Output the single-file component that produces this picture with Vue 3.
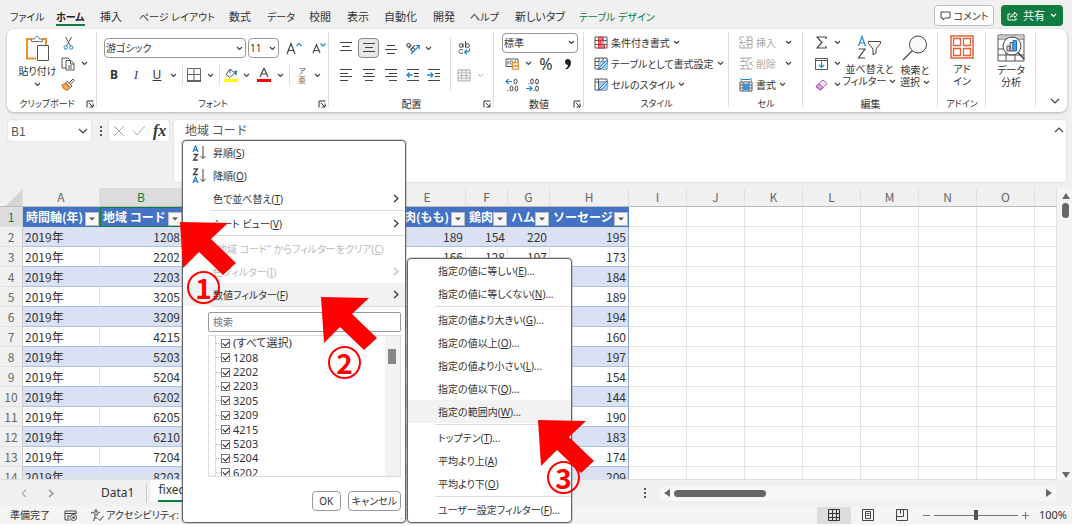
<script setup>
import { h } from 'vue'

const K = 'stroke="#444"'
const B = 'stroke="#1e88d2"'
const shapes = {
  chev: [7, 5, `<path d="M1 1l2.5 2.5L6 1" ${K} stroke-width="1.2"/>`],
  chevBig: [10, 6, `<path d="M1 1l4 4 4-4" ${K} stroke-width="1.2"/>`],
  chevUp: [10, 6, `<path d="M1 5l4-4 4 4" ${K} stroke-width="1.2"/>`],
  chevGrey: [7, 5, `<path d="M1 1l2.5 2.5L6 1" stroke="#aaa"/>`],
  chevWhite: [7, 5, `<path d="M1 1l2.5 2.5L6 1" stroke="#fff" stroke-width="1.2"/>`],
  right: [6, 9, `<path d="M1 1l4 3.500-4 3.500" stroke="currentColor" stroke-width="1.200"/>`],
  left: [6, 9, `<path d="M5 1L1 4.500l4 3.500" stroke="#888"/>`],
  launch: [8, 8, `<path d="M1 7.500V1h6.500M3 3l4 4M7 3.500V7H3.500" stroke="#333"/>`],
  comment: [11, 10, `<path d="M1 1h9v6H5L3 9V7H1z" ${K}/>`],
  share: [11, 11, `<path d="M3.500 4H1v6h8V8M3.500 7.500C4 4.500 6 4 7.500 4V2L10.300 5 7.500 7.500V6C6 6 4.500 6 3.500 7.500z" stroke="#fff"/>`],
  paste: [25, 27, `<path d="M7 4H2v19.500h9M17 4h4v6" stroke="#e8912d" stroke-width="2"/><path d="M3 5h17v17H3z" fill="#fafafa"/><path d="M6.500 6V4h3.200c.3-3.500 4.300-3.500 4.600 0h3.200v2.500h-11z" fill="#fff" stroke="#777"/><path d="M12.500 10.500h11v15h-11z" fill="#fff" stroke="#555"/>`],
  cut: [11, 14, `<path d="M2.500 1l5 9M8.500 1l-5 9" stroke="#555"/><circle cx="2.800" cy="11.500" r="1.700" ${B}/><circle cx="8.200" cy="11.500" r="1.700" ${B}/>`],
  copy: [14, 14, `<path d="M5 11H1V1h6l2 2M5 3.500h5l3 3V13H5zM9.500 3.500V7H13M7 9h4M7 11h4" stroke="#555"/>`],
  brush: [14, 13, `<path d="M8 5l4-4 1 1.500-3.500 4" fill="#fff" stroke="#555"/><path d="M6 3.500l5 4.500-1.500 1.500-5-4.500z" fill="#fff" stroke="#555"/><path d="M4 5.500L1 7c1 3 3 5 5.500 5l2.500-2.500z" fill="#f7b06a" stroke="#e07a1f" stroke-width="1.300"/>`],
  grow: [16, 13, `<path d="M1 12L5 1.500l4 10.500M2.500 8.500h5" ${K} stroke-width="1.200"/><path d="M10.500 4L13 1.500 15.500 4" ${B} stroke-width="1.200"/>`],
  shrink: [14, 12, `<path d="M1 11l3.500-8.500L8 11M2.300 8.500h4.400" ${K} stroke-width="1.200"/><path d="M8.500 1.500L11 4l2.500-2.500" ${B} stroke-width="1.200"/>`],
  border: [14, 14, `<path d="M.500 .500h13M.500 .500v12M13.500 .500v12M7 .500v12M.500 6.500h13" stroke="#666"/><path d="M0 13h14" stroke="#333" stroke-width="1.500"/>`],
  fill: [14, 14, `<path d="M6 1L2 6.500l4 3 4.500-4.500zM6 1v4" stroke="#555"/><path d="M10 3l3-.500-.500 5.500-1.500-2z" fill="#1e6fc2"/><path d="M0 11h14v3H0z" fill="#ff0"/>`],
  color: [14, 14, `<path d="M3 9L7 0l4 9M4.500 6h5" ${K} stroke-width="1.200"/><path d="M0 11h14v3H0z" fill="#f00"/>`],
  top: [14, 14, `<path d="M1 1.500h12M3 5.500h8M1 9.500h12" ${K}/>`],
  mid: [14, 14, `<path d="M1 2.500h12M3 6.500h8M1 10.500h12" ${K}/>`],
  bot: [14, 14, `<path d="M3 5.500h8M1 9.500h12M3 13.500h8" ${K} transform="translate(0 -1)"/>`],
  al: [14, 14, `<path d="M1 1.500h12M1 5.500h8M1 8.500h12M1 12.500h8" ${K}/>`],
  ac: [14, 14, `<path d="M1 1.500h12M3 5.500h8M1 8.500h12M3 12.500h8" ${K}/>`],
  ar: [14, 14, `<path d="M1 1.500h12M5 5.500h8M1 8.500h12M5 12.500h8" ${K}/>`],
  outd: [14, 14, `<path d="M1 1.500h12M8 5.500h5M8 8.500h5M1 12.500h12" ${K}/><path d="M6.500 7H1M3.500 4.500L1 7l2.500 2.500" ${B} stroke-width="1.300"/>`],
  ind: [14, 14, `<path d="M1 1.500h12M8 5.500h5M8 8.500h5M1 12.500h12" ${K}/><path d="M0 7h6M3.500 4.500L6 7 3.500 9.500" ${B} stroke-width="1.300"/>`],
  orient: [14, 14, `<g transform="rotate(45 5 6)" ${K}><circle cx="2" cy="6.500" r="1.700"/><path d="M4 4.500V8.500M6.500 2v6.500"/><circle cx="8.300" cy="6.500" r="1.700"/></g><path d="M5 13l8-8M9.500 4.500H13.300V8" ${B} stroke-width="1.200"/>`],
  wrap: [13, 14, `<g ${K}><circle cx="3" cy="4.500" r="1.800"/><path d="M5 2.500v4M7.500 0v6.500M5 9c-3-1.500-4 .5-4 1.700S3 13 5 12"/><circle cx="9.500" cy="4.500" r="1.900"/></g><path d="M11.500 7.500c.8 2.500-1 3.500-4.500 3.500M8.800 8.500L6.500 11l2.300 2.300" ${B} stroke-width="1.200"/>`],
  merge: [14, 13, `<path d="M1 1h12v11H1zM1 4h12M1 9h12M5 1v3M9 1v3M5 9v3M9 9v3M3.500 6.500h7M5 5L3.500 6.500 5 8M9 5l1.500 1.500L9 8" stroke="#aaa"/>`],
  money: [15, 12, `<path d="M7 8.500H1V1h12v3M3 3v3.500M11 3H9.500" stroke="#555"/><circle cx="6.500" cy="4.500" r="1.500" stroke="#555"/><path d="M7.500 5.500c0-1.500 6-1.500 6 0v5c0 1.500-6 1.500-6 0zM7.500 8h6" fill="#fff" stroke="#e8912d" stroke-width="1.300"/>`],
  comma: [8, 14, `<path d="M1 4.500C1 1 7 1 7 5.500 7 9 5 11.500 2 12.500L1.500 11.500C3 10.500 4 9.500 4 8 2 8 1 6.500 1 4.500z" fill="#222"/>`],
  incDec: [14, 14, `<path d="M7 3.500H1M3.500 1L1 3.500 3.500 6" ${B} stroke-width="1.200"/><ellipse cx="10.500" cy="3.500" rx="1.500" ry="2.500" ${K}/><ellipse cx="6.500" cy="10.500" rx="1.400" ry="2.500" ${K}/><ellipse cx="11.500" cy="10.500" rx="1.400" ry="2.500" ${K}/><path d="M2.500 12.500h1" ${K}/>`],
  decDec: [14, 14, `<path d="M0 10.500h6M3.500 8L6 10.500 3.500 13" ${B} stroke-width="1.200"/><ellipse cx="6" cy="3.500" rx="1.400" ry="2.500" ${K}/><ellipse cx="11" cy="3.500" rx="1.400" ry="2.500" ${K}/><ellipse cx="11" cy="10.500" rx="1.500" ry="2.500" ${K}/><path d="M2.500 5.500h1M7.500 12.500h1" ${K}/>`],
  cond: [14, 13, `<path d="M1 1h12v11H1zM1 4.500h12M1 8.500h12M5 1v11M9 1v11" stroke="#555"/><path d="M4.500 1h4v3.500h-4zM4.500 8.500h6V12h-6zM4.500 5h2.500v3H4.500z" fill="#f4777f" stroke="#d13438"/>`],
  tbl: [14, 13, `<path d="M1 1h12v11H1zM1 4.500h12M1 8.500h12M5 1v11M9 1v11" stroke="#555"/><path d="M5 4.500h8V12H5z" fill="#9ccdf2"/><path d="M13 3L7 9l-3 3.500 4-1.500 5.500-6z" fill="#fff" stroke="#1e6fc2"/>`],
  cellSt: [14, 13, `<path d="M1 1h12v11H1zM1 4h12M4.500 1v11" stroke="#555"/><path d="M5 4.500h8V12H5z" fill="#9ccdf2"/><path d="M13 3L7 9l-3 3.500 4-1.500 5.500-6z" fill="#fff" stroke="#1e6fc2"/>`],
  ins: [14, 13, `<path d="M5 1H1v3M1 9v3h12V1H7M9 1v11M5 9v3M7 4.500h6M7 8.500h6M7 6.500H1M3.500 4L1 6.500 3.500 9" stroke="#aaa"/>`],
  del: [14, 13, `<path d="M1 1h12M1 12h12M4 1v3M9 1v3M4 9v3M9 9v3M1 4.500h7M1 8.500h7M8 4.500v4M10 4.500l3.500 4M13.500 4.500l-3.500 4" stroke="#aaa"/>`],
  fmt: [14, 14, `<path d="M1 4h12v9H1zM1 7h12M1 10h12M4 4v9M10 4v9" stroke="#555"/><path d="M4.500 5.500h5.500V12H4.500z" fill="#3c96dc"/><path d="M2 0v3M12 0v3M3 1.500h8" ${B}/>`],
  sum: [11, 13, `<path d="M10 3V1H1l5 5.500L1 12h9v-2" ${K} stroke-width="1.200"/>`],
  down: [13, 12, `<path d="M.500 .500h12v11H.500zM.500 2.500h12" stroke="#555"/><path d="M6.500 3.500v6M4 7l2.500 2.500L9 7" ${B} stroke-width="1.200"/>`],
  eraser: [13, 12, `<path d="M1 7.500L8 1l4 3.500L5.500 11z" fill="#fff" stroke="#a33fb0"/><path d="M1 7.500L4 4.500l4 4L5.500 11z" fill="#d9a5e0" stroke="#a33fb0"/>`],
  sort: [25, 25, `<path d="M1.500 11L5 1.500l3.500 9.500M2.700 8h4.600" ${B} stroke-width="1.200"/><path d="M1.500 14h6.500l-6.500 9H8" ${K} stroke-width="1.200"/><path d="M11.500 6.500h12v2L19 14v4l-3 2v-6l-4.500-5.500z" ${K}/>`],
  find: [26, 26, `<circle cx="16" cy="9.500" r="8.500" fill="#fafafa" ${K}/><path d="M10 16l-9 9" ${K} stroke-width="1.200"/>`],
  addin: [24, 24, `<path d="M1 1h22v22H1z" stroke="#e2603a" stroke-width="1.500"/><path d="M3.500 3.500h7v7h-7zM13.500 3.500h7v7h-7zM3.500 13.500h7v7h-7zM13.500 13.500h7v7h-7z" stroke="#e2603a" stroke-width="1.300"/>`],
  analyze: [28, 28, `<path d="M1 1h26v26H1zM1 5h26M1 15h8M1 21h26M9 1v4M18 1v4M9 17v10M18 20v7" stroke="#555"/><path d="M1.500 1.500h25v3h-25z" fill="#ccc"/><circle cx="15" cy="12" r="9" fill="#fff" stroke="#444"/><path d="M21 18.500l6 6.500" stroke="#444" stroke-width="1.500"/><path d="M10 12h3v5h-3zM13 8.500h3V17h-3z" fill="#ddd" stroke="#555"/><path d="M16 6.500h3.500V17H16z" fill="#4ca3e8" stroke="#1e6fc2"/>`],
  x: [12, 12, `<path d="M1 1l10 10M11 1L1 11" stroke="#aaa"/>`],
  check: [14, 11, `<path d="M1 5.500L5 10l8-9" stroke="#aaa"/>`],
  asc: [14, 16, `<path d="M1 7l2.500-6L6 7M2 5h3" stroke="#1e88d2" stroke-width="1.300"/><path d="M1.500 9.500H5.500L1.500 15H6" ${K} stroke-width="1.300"/><path d="M11 1v12.500M8.500 11L11 13.500l2.500-2.500" ${K}/>`],
  desc: [14, 16, `<path d="M1.500 1H5.500L1.500 6.500H6" ${K} stroke-width="1.300"/><path d="M1 15l2.500-6L6 15M2 13h3" stroke="#1e88d2" stroke-width="1.300"/><path d="M11 1v12.500M8.500 11L11 13.500l2.500-2.500" ${K}/>`],
  triUp: [8, 6, `<path d="M4 0l4 6H0z" fill="#666"/>`],
  triDown: [8, 6, `<path d="M4 6l4-6H0z" fill="#666"/>`],
  triL: [6, 8, `<path d="M0 4l6-4v8z" fill="#666"/>`],
  triR: [6, 8, `<path d="M6 4L0 0v8z" fill="#666"/>`],
  macro: [13, 11, `<path d="M6 10H1V1h11v3M1 3.500h11M3 6h3M3 8h2" ${K}/><circle cx="9.500" cy="7.500" r="3" ${K}/><circle cx="9.500" cy="7.500" r="1.300" fill="#444"/>`],
  access: [13, 13, `<circle cx="5" cy="2" r="1.200" ${K}/><path d="M1 3l3 1.500v3L2.500 12M9 3L6 4.500V7M1 3l-.5 1.500M5 8v2M7 9.500l2 2 3.500-4.500" ${K}/>`],
  normal: [12, 12, `<path d="M.500 .500h11v11H.500zM.500 4.500h11M.500 8.500h11M4.500 .500v11M8.500 .500v11" stroke="#333"/>`],
  layout: [12, 12, `<path d="M.500 .500h11v11H.500zM3.500 2.500h5v7h-5zM4.500 4.500h3M4.500 6.500h3" stroke="#444"/>`],
  breaks: [12, 12, `<path d="M.500 .500h11v11H.500zM.500 7.500h7V.500M4.500 .500v4" stroke="#444"/>`],
  filterTri: [6, 4, `<path d="M0 .500h6L3 3.500z" fill="#555"/>`]
}
const Icon = (p) => {
  const [w, ht, inner] = shapes[p.n]
  return h('svg', { width: w, height: ht, viewBox: `0 0 ${w} ${ht}`, fill: 'none', 'aria-hidden': 'true', innerHTML: inner })
}
Icon.props = ['n']

const tabs = ['ファイル', 'ホーム', '挿入', 'ページ レイアウト', '数式', 'データ', '校閲', '表示', '自動化', '開発', 'ヘルプ', '新しいタブ', 'テーブル デザイン']
const isKana = (t) => /^[ァ-ー ]+$/.test(t)

const cols = [
  ['A', 'a', '時間軸(年)'], ['B', 'b', '地域 コード'], ['', 'c', ''], ['', 'c', ''], ['E', 'a', '豚肉(もも)'],
  ['F', 'f', '鶏肉'], ['G', 'f', 'ハム'], ['H', 'h', 'ソーセージ']
]
const blanks = ['I', 'J', 'K', 'L', 'M', 'N', 'O', '']
const codes = [1208, 2202, 2203, 3205, 3209, 4215, 5203, 5204, 6202, 6205, 6210, 7204, 8203]
const sausage = [195, 173, 184, 189, 194, 160, 197, 154, 144, 190, 183, 174, 209]
const extra = [[189, 154, 220], [166, 128, 197]]
const rows = codes.map((c, i) => ['2019年', c, '', '', ...(extra[i] || ['', '', '']), sausage[i]])

const menu = [
  { t: '昇順', k: 'S', i: 'asc' }, { t: '降順', k: 'O', i: 'desc' }, { t: '色で並べ替え', k: 'T', sub: true }, null,
  { t: 'シート ビュー', k: 'V', sub: true }, null,
  { t: '"地域 コード" からフィルターをクリア', k: 'C', off: true }, { t: '色フィルター', k: 'I', off: true, sub: true },
  { t: '数値フィルター', k: 'F', sub: true, on: true }
]
const submenu = [
  { t: '指定の値に等しい', k: 'E', e: '...' }, { t: '指定の値に等しくない', k: 'N', e: '...' }, null,
  { t: '指定の値より大きい', k: 'G', e: '...' }, { t: '指定の値以上', k: 'O', e: '...' },
  { t: '指定の値より小さい', k: 'L', e: '...' }, { t: '指定の値以下', k: 'Q', e: '...' },
  { t: '指定の範囲内', k: 'W', e: '...', on: true }, null,
  { t: 'トップテン', k: 'T', e: '...' }, { t: '平均より上', k: 'A' }, { t: '平均より下', k: 'O' }, null,
  { t: 'ユーザー設定フィルター', k: 'F', e: '...' }
]
const choices = ['(すべて選択)', 1208, 2202, 2203, 3205, 3209, 4215, 5203, 5204, 6202]
</script>

<template>
  <div class="app">
    <header class="topbar">
      <nav class="tabs">
        <button v-for="(t, i) in tabs" :key="t" :class="{ active: i === 1, design: i === 12, kana: isKana(t) }"><span>{{ t }}</span></button>
      </nav>
      <button class="comment"><Icon n="comment" />コメント</button>
      <button class="share"><Icon n="share" />共有<Icon n="chevWhite" /></button>
    </header>

    <section class="ribbon">
      <div class="group g-clip">
        <div class="body">
          <button class="big"><Icon n="paste" /><span>貼り付け</span><Icon n="chev" /></button>
          <div class="three clip-tools">
            <button aria-label="切り取り"><Icon n="cut" /></button><i></i>
            <button aria-label="コピー"><Icon n="copy" /></button><Icon n="chev" />
            <button aria-label="書式のコピー"><Icon n="brush" /></button><i></i>
          </div>
        </div>
        <footer class="small">クリップボード<Icon n="launch" class="launch" /></footer>
      </div>

      <div class="group g-font">
        <div class="body stack">
          <div class="line font-pick">
            <label class="pick"><select aria-label="フォント"><option>游ゴシック</option></select><Icon n="chev" /></label>
            <label class="pick"><select aria-label="サイズ"><option>11</option></select><Icon n="chev" /></label>
            <button aria-label="拡大"><Icon n="grow" /></button>
            <button aria-label="縮小"><Icon n="shrink" /></button>
          </div>
          <div class="line font-tools">
            <button><b>B</b></button><button class="ital">I</button><button><u>U</u></button><Icon n="chev" /><hr>
            <button aria-label="罫線"><Icon n="border" /></button><Icon n="chev" /><hr>
            <button aria-label="塗りつぶし"><Icon n="fill" /></button><Icon n="chev" />
            <button aria-label="文字色"><Icon n="color" /></button><Icon n="chev" /><hr>
            <button class="ruby"><span>ア</span><span>亜</span></button><Icon n="chev" />
          </div>
        </div>
        <footer class="small">フォント<Icon n="launch" class="launch" /></footer>
      </div>

      <div class="group g-align">
        <div class="body">
          <div class="stack">
            <div class="line align-tools">
              <button aria-label="上揃え"><Icon n="top" /></button><button class="pressed" aria-label="上下中央"><Icon n="mid" /></button>
              <button aria-label="下揃え"><Icon n="bot" /></button><button aria-label="方向"><Icon n="orient" /></button><Icon n="chev" />
            </div>
            <div class="line align-tools">
              <button aria-label="左揃え"><Icon n="al" /></button><button aria-label="中央揃え"><Icon n="ac" /></button>
              <button aria-label="右揃え"><Icon n="ar" /></button><button aria-label="字下げ解除"><Icon n="outd" /></button>
              <button aria-label="字下げ"><Icon n="ind" /></button>
            </div>
          </div>
          <hr class="tall">
          <div class="stack">
            <div class="line merge-tools"><button aria-label="折り返し"><Icon n="wrap" /></button></div>
            <div class="line merge-tools"><button aria-label="結合"><Icon n="merge" /></button><Icon n="chevGrey" /></div>
          </div>
        </div>
        <footer>配置<Icon n="launch" class="launch" /></footer>
      </div>

      <div class="group g-num">
        <div class="body three">
          <label class="pick"><select aria-label="表示形式"><option>標準</option></select><Icon n="chev" /></label>
          <div class="line num-tools">
            <button aria-label="通貨"><Icon n="money" /></button><Icon n="chev" /><button class="pct">%</button><button aria-label="桁区切り"><Icon n="comma" /></button>
          </div>
          <div class="line num-tools two">
            <button aria-label="小数点以下を増やす"><Icon n="incDec" /></button><button aria-label="小数点以下を減らす"><Icon n="decDec" /></button>
          </div>
        </div>
        <footer>数値<Icon n="launch" class="launch" /></footer>
      </div>

      <div class="group g-style">
        <div class="body three wide">
          <button class="item"><Icon n="cond" />条件付き書式<Icon n="chev" /></button>
          <button class="item"><Icon n="tbl" />テーブルとして書式設定<Icon n="chev" /></button>
          <button class="item"><Icon n="cellSt" />セルのスタイル<Icon n="chev" /></button>
        </div>
        <footer class="small">スタイル</footer>
      </div>

      <div class="group g-cell">
        <div class="body three wide">
          <button class="item off"><Icon n="ins" />挿入<Icon n="chev" class="far" /></button>
          <button class="item off"><Icon n="del" />削除<Icon n="chev" class="far" /></button>
          <button class="item"><Icon n="fmt" />書式<Icon n="chev" /></button>
        </div>
        <footer class="small">セル</footer>
      </div>

      <div class="group g-edit">
        <div class="body">
          <div class="three edit-tools">
            <button aria-label="合計"><Icon n="sum" /></button><Icon n="chev" />
            <button aria-label="フィル"><Icon n="down" /></button><Icon n="chev" />
            <button aria-label="クリア"><Icon n="eraser" /></button><Icon n="chev" />
          </div>
          <button class="big"><Icon n="sort" /><span>並べ替えと</span><span>フィルター <Icon n="chev" /></span></button>
          <button class="big"><Icon n="find" /><span>検索と</span><span>選択 <Icon n="chev" /></span></button>
        </div>
        <footer>編集</footer>
      </div>

      <div class="group g-add">
        <div class="body"><button class="big"><Icon n="addin" /><span>アド</span><span>イン</span></button></div>
        <footer class="small">アドイン</footer>
      </div>
      <div class="group g-data">
        <div class="body"><button class="big"><Icon n="analyze" /><span>データ</span><span>分析</span></button></div>
        <footer></footer>
      </div>
      <button class="collapse" aria-label="リボンを折りたたむ"><Icon n="chevBig" /></button>
    </section>

    <section class="formula">
      <label class="namebox"><input value="B1" aria-label="名前ボックス"><Icon n="chevBig" /></label>
      <span class="dots"><i></i><i></i><i></i></span>
      <div class="fx"><Icon n="x" /><Icon n="check" /><em>fx</em></div>
      <label class="fbar"><input value="地域 コード" aria-label="数式バー"><Icon n="chevUp" /></label>
    </section>

    <main class="sheet">
      <div class="grid">
        <table>
          <colgroup>
            <col class="c-no"><col v-for="(c, i) in cols" :key="i" :class="'c-' + c[1]">
            <col v-for="(b, i) in blanks" :key="b" :class="i < 7 ? 'c-x' : ''">
          </colgroup>
          <thead>
            <tr>
              <th class="corner"></th>
              <th v-for="(c, i) in cols" :key="i" :class="{ sel: i === 1 }">{{ c[0] }}</th>
              <th v-for="b in blanks" :key="b">{{ b }}</th>
            </tr>
          </thead>
          <tbody>
            <tr class="heads">
              <th class="sel">1</th>
              <td v-for="(c, i) in cols" :key="i" :class="{ cur: i === 1 }">
                <div><span>{{ c[2] }}</span><button aria-label="フィルター"><Icon n="filterTri" /></button></div>
              </td>
              <td v-for="b in blanks" :key="b" class="blank"></td>
            </tr>
            <tr v-for="(r, i) in rows" :key="i" :class="{ band: i % 2 === 0 }">
              <th>{{ i + 2 }}</th>
              <td v-for="(v, j) in r" :key="j" :class="{ txt: j === 0, last: j === 7 }">{{ v }}</td>
              <td v-for="b in blanks" :key="b" class="blank"></td>
            </tr>
          </tbody>
        </table>
      </div>
      <div class="vscroll"><Icon n="triUp" /><i></i><Icon n="triDown" /></div>
    </main>

    <section class="sheets">
      <button class="nav" aria-label="前へ"><Icon n="left" /></button>
      <button class="nav" aria-label="次へ"><Icon n="right" /></button>
      <button class="tab">Data1</button>
      <button class="tab open"><span>fixed</span></button>
      <span class="dots"><i></i><i></i><i></i></span>
      <div class="hscroll"><Icon n="triL" /><i></i><Icon n="triR" /></div>
    </section>

    <footer class="status">
      <span>準備完了</span><Icon n="macro" />
      <span class="acc"><Icon n="access" />アクセシビリティ: 問題</span>
      <div class="views">
        <button class="on" aria-label="標準"><Icon n="normal" /></button>
        <button aria-label="ページ レイアウト"><Icon n="layout" /></button>
        <button aria-label="改ページ"><Icon n="breaks" /></button>
      </div>
      <div class="zoom">
        <button aria-label="縮小"></button>
        <input type="range" min="0" max="100" value="50" aria-label="ズーム">
        <button class="plus" aria-label="拡大"></button>
      </div>
      <span class="pc">100%</span>
    </footer>

    <div class="menu main-menu">
      <template v-for="(m, i) in menu" :key="i">
        <hr v-if="!m">
        <button v-else class="mi" :class="{ off: m.off, on: m.on }">
          <span class="mic"><Icon v-if="m.i" :n="m.i" /></span>
          <span>{{ m.t }}(<u>{{ m.k }}</u>)</span>
          <Icon v-if="m.sub" n="right" class="arrow" />
        </button>
      </template>
      <hr>
      <div class="panel">
        <input class="search" placeholder="検索" aria-label="検索">
        <div class="list">
          <div class="opts">
            <label v-for="c in choices" :key="c"><input type="checkbox" checked><span>{{ c }}</span></label>
          </div>
          <div class="track"><i></i></div>
        </div>
        <div class="acts"><button>OK</button><button>キャンセル</button></div>
      </div>
      <span class="grip"></span>
    </div>

    <div class="menu sub-menu">
      <template v-for="(m, i) in submenu" :key="i">
        <hr v-if="!m">
        <button v-else class="mi" :class="{ on: m.on }"><span class="mic"></span><span>{{ m.t }}(<u>{{ m.k }}</u>){{ m.e }}</span></button>
      </template>
    </div>

    <div v-for="n in 3" :key="n" class="note" :class="'n' + n">
      <svg width="56" height="54" viewBox="0 0 56 54"><path d="M0 0L48 1 31 17 56 41 43 53 19 30 3 46z" fill="#f00" /></svg>
      <span>{{ n }}</span>
    </div>
  </div>
</template>

<style>
body { background: #fff; }
</style>

<style scoped>
* { box-sizing: border-box; }
.app {
  position: relative;
  overflow: hidden;
  background: #f0f0f0;
  color: #333;
  font: 11px/14px "Noto Sans", "Noto Sans CJK JP", sans-serif;
  font-feature-settings: "palt";
}
button, input, select { font: inherit; color: inherit; font-feature-settings: inherit; }
button { border: 0; padding: 0; margin: 0; background: none; white-space: nowrap; }
svg { flex: none; display: block; }
hr { border: 0; margin: 0; }

.topbar { display: flex; align-items: flex-start; height: 29px; padding: 5px 9px 0 10px; }
.tabs { flex: 1; display: grid; grid-template-columns: 46px 44px 39px 90px 38px 42px 38px 37px 49px 37px 45px 64px auto; }
.tabs button { justify-self: start; height: 21px; }
.tabs .kana { font-size: 10px; }
.tabs span { display: block; height: 20px; padding-top: 4px; }
.tabs .active span { font-weight: 700; border-bottom: 2px solid #107c41; color: #222; }
.tabs .design { color: #107c41; }
.comment, .share { display: flex; align-items: center; justify-content: center; gap: 3px; height: 21px; border-radius: 4px; }
.comment { width: 60px; border: 1px solid #bbb; background: #fff; font-size: 10px; }
.share { width: 62px; margin-left: 7px; background: #107c41; color: #fff; gap: 5px; }

.ribbon { display: flex; margin: 0 5px 0 7px; height: 83px; background: #fff; border-radius: 7px; box-shadow: 0 1px 3px #0004; padding: 3px 0 1px; }
.group { flex: none; display: flex; flex-direction: column; position: relative; }
.group::after { content: ""; position: absolute; right: 0; top: 0; bottom: 4px; width: 1px; background: #ddd; }
.group footer { height: 14px; text-align: center; font-size: 10px; position: relative; }
.group .small { font-size: 9px; }
.launch { position: absolute; right: 3px; top: 3px; }
.body { flex: 1; display: flex; }
.g-clip { width: 90px; } .g-font { width: 232px; } .g-align { width: 165px; } .g-num { width: 90px; }
.g-style { width: 145px; } .g-cell { width: 74px; } .g-edit { width: 135px; } .g-add { width: 48px; } .g-data { width: 50px; }
.g-clip footer { padding-right: 10px; }
.big { display: flex; flex-direction: column; align-items: center; font-size: 10px; line-height: 12px; padding-top: 3px; }
.big > svg:first-child { margin-bottom: 4px; }
.big span { display: flex; align-items: center; gap: 3px; }
.three { display: grid; grid-auto-rows: 21px; align-content: start; align-items: center; justify-items: center; }
.g-clip .big { width: 52px; padding-left: 9px; }
.g-clip .big > svg:first-child { margin-bottom: 3px; }
.g-clip .big > svg:last-child { margin-top: 5px; }
.clip-tools { grid-template-columns: 18px 14px; }
.stack { display: flex; flex-direction: column; gap: 7px; padding-top: 6px; }
.line { display: grid; height: 20px; align-items: center; justify-items: center; }
.line hr { width: 1px; height: 20px; background: #ddd; }
.g-font .stack { padding-left: 6px; }
.font-pick { grid-template-columns: 142px 31px 26px 20px; column-gap: 2px; padding-left: 1px; }
.font-tools { grid-template-columns: 22px 22px 20px 12px 6px 18px 14px 4px 20px 11px 23px 10px 8px 18px 12px; font-size: 12px; }
.ital { font-style: italic; font-family: "Liberation Serif", serif; }
.ruby { display: grid; font-size: 8px; line-height: 9px; color: #666; }
.pick { position: relative; display: flex; align-items: center; width: 100%; height: 20px; border: 1px solid #999; border-radius: 4px; background: #fff; }
.pick select { appearance: none; border: 0; background: none; width: 100%; padding: 0 0 0 1px; height: 18px; outline: 0; font-size: 10px; }
.pick svg { position: absolute; right: 2px; }
.align-tools { grid-template-columns: 22px 23px 22px 21px 22px; }
.align-tools > svg { justify-self: start; margin-left: 2px; }
.g-align .body { padding-left: 6px; }
.pressed { width: 21px; height: 20px; border: 1px solid #888; border-radius: 4px; background: #e8e8e8; display: grid; place-items: center; }
.tall { width: 1px; height: 52px; margin: 6px 2px 0 5px; background: #ddd; }
.merge-tools { grid-template-columns: 22px 10px; }
.g-num .three { justify-items: stretch; padding: 0 6px 0 8px; }
.num-tools { grid-template-columns: 20px 12px 24px 20px; }
.num-tools.two { grid-template-columns: 20px 22px; }
.pct { font-size: 16px; }
.wide { justify-items: start; }
.item { display: flex; align-items: center; gap: 3px; font-size: 10px; }
.item.off { color: #aaa; }
.far { margin-left: 6px; }
.g-style .three { padding-left: 10px; } .g-cell .three { padding-left: 10px; }
.edit-tools { grid-template-columns: 20px 12px; padding-left: 8px; }
.g-edit .big { width: 53px; } .g-edit .big:last-child { width: 38px; }
.g-edit .big > svg:first-child { margin-bottom: 3px; }
.g-add .big, .g-data .big { width: 100%; }
.g-data .big { padding-top: 2px; } .g-data .big > svg:first-child { margin-bottom: 2px; }
.collapse { margin-left: auto; align-self: flex-end; padding: 0 7px 7px; }

.formula { display: flex; align-items: flex-start; margin: 7px 5px 0 7px; }
.formula > label, .fx { background: #fff; border-radius: 4px; border: 1px solid #e4e4e4; display: flex; align-items: center; height: 23px; }
.formula input { border: 0; outline: 0; background: none; min-width: 0; width: 100%; padding: 0; font: 12px/16px "Noto Sans CJK JP", sans-serif; font-feature-settings: normal; color: #555; }
.namebox { width: 85px; padding: 0 3px; }
.dots { width: 16px; display: grid; gap: 2px; justify-content: center; align-self: center; }
.formula .dots { align-self: flex-start; padding: 7px 0 0 2px; }
.dots i { width: 2px; height: 2px; background: #555; }
.fx { width: 62px; padding: 0 4px; gap: 7px; }
.fx em { font: italic 700 16px/18px "Liberation Serif", serif; font-feature-settings: normal; }
.formula > .fbar { flex: 1; margin-left: 3px; height: 64px; align-items: flex-start; padding: 2px 2px 0 11px; }
.fbar svg { margin-top: 5px; }

.sheet { display: flex; height: 292px; margin-top: 5px; }
.grid { flex: 1; overflow: hidden; min-width: 0; border-bottom: 1px solid #ddd; }
table { border-collapse: separate; border-spacing: 0; table-layout: fixed; width: 100%; background: #fff; font: 12px/19px "Noto Sans CJK JP", sans-serif; font-feature-settings: normal; }
.c-no { width: 23px; } .c-a { width: 77px; } .c-b { width: 83px; } .c-c { width: 103px; } .c-f { width: 42px; } .c-h { width: 79px; } .c-x { width: 58px; }
th { font-weight: 400; padding: 0; background: #f0f0f0; color: #666; text-align: center; }
thead th { height: 19px; border-right: 1px solid #e0e0e0; border-bottom: 1px solid #bbb; line-height: 18px; }
thead th.corner { background: linear-gradient(135deg, #f0f0f0 58%, #d5d5d5 58%); }
thead th.sel, tbody th.sel { background: #dcdcdc; color: #107c41; }
tbody th { border-bottom: 1px solid #e2e2e2; border-right: 1px solid #ccc; }
td { height: 20px; padding: 0 2px; border-bottom: 1px solid #a9bfe8; border-right: 1px solid #e4e4e4; text-align: right; overflow: hidden; white-space: nowrap; }
.band td { background: #d9e1f2; border-right-color: #d9e1f2; }
td.txt { text-align: left; }
td.last { border-right-color: #8ea9db; }
tbody td.blank { background: #fff; border-color: #e4e4e4; }
.heads td { background: #4472c4; color: #fff; font-weight: 700; padding: 0; border-color: #4472c4; }
.heads td.cur { outline: 1px solid #107c41; outline-offset: -1px; }
.heads td div { display: flex; justify-content: flex-end; align-items: flex-end; height: 19px; }
.heads span { flex: 1; text-align: left; padding-left: 3px; min-width: 0; }
.heads button { width: 14px; height: 14px; background: #f8f8f8; border: 1px solid #bbb; display: grid; place-items: center; flex: none; }
.vscroll { width: 15px; display: flex; flex-direction: column; align-items: center; padding: 5px 0 2px 2px; background: #f5f5f5; }
.vscroll i { width: 7px; height: 15px; margin: 4px 0 auto; border-radius: 4px; background: #666; }

.sheets { display: flex; align-items: center; height: 26px; padding: 0 15px 0 10px; }
.nav { width: 27px; display: grid; place-items: center; color: #888; }
.tab { font-size: 12px; padding: 0 12px; margin-left: 25px; height: 20px; border-right: 1px solid #ccc; }
.tab.open { background: #fff; margin-left: 4px; padding: 0 7px; height: 22px; align-self: flex-start; border: 0; }
.open span { display: block; border-bottom: 2px solid #107c41; height: 21px; padding-top: 2px; }
.sheets > .dots { margin-left: auto; width: 14px; }
.hscroll { width: 398px; height: 15px; margin-left: 7px; padding: 0 5px; border-radius: 7px; background: #f6f6f6; display: flex; align-items: center; }
.hscroll i { width: 92px; height: 7px; border-radius: 4px; background: #666; margin: 0 auto 0 4px; }

.status { display: flex; align-items: center; height: 20px; background: #f4f4f4; padding: 0 5px 0 10px; font-size: 10px; gap: 14px; border-bottom: 2px solid #fff; }
.acc { display: flex; align-items: center; gap: 2px; }
.views { margin-left: auto; display: flex; }
.views button { width: 34px; height: 17px; display: grid; place-items: center; }
.views .on { background: #ddd; }
.zoom { display: flex; align-items: center; gap: 4px; margin-left: -10px; }
.zoom button { width: 7px; height: 7px; background: linear-gradient(#777, #777) center / 7px 1px no-repeat; }
.zoom .plus { background: linear-gradient(#777, #777) center / 7px 1px no-repeat, linear-gradient(#777, #777) center / 1px 7px no-repeat; }
.zoom input { appearance: none; width: 84px; height: 10px; margin: 0; background: linear-gradient(#777, #777) center / 100% 1px no-repeat; }
.zoom input::-webkit-slider-thumb { appearance: none; width: 4px; height: 10px; background: #555; }
.pc { font-size: 11px; margin-left: -4px; }

.menu { position: absolute; background: #fff; border: 1px solid #666; border-radius: 4px; box-shadow: 0 0 0 1px #6664; font-size: 10px; }
.menu hr { height: 1px; background: #ddd; margin-left: 27px; }
.mi { display: flex; align-items: center; width: 100%; height: 23px; text-align: left; padding: 0 6px 0 0; }
.mi.on { background: #f2f2f2; }
.mi.off { color: #bbb; }
.mic { width: 30px; padding-left: 9px; }
.arrow { margin-left: auto; }
.main-menu { left: 182px; top: 140px; width: 224px; height: 383px; }
.main-menu hr { margin-bottom: 1px; }
.panel { padding: 4px 4px 0 25px; }
.search { display: block; width: 100%; height: 20px; border: 1px solid #999; border-radius: 2px; padding: 0 4px; outline: 0; background: #fff; }
.search::placeholder { color: #777; }
.list { display: flex; margin-top: 3px; height: 142px; border: 1px solid #ddd; overflow: hidden; }
.opts { flex: 1; display: flex; flex-direction: column; height: 144px; margin-left: 6px; border-left: 1px dotted #bbb; }
.opts label { flex: 1; display: flex; align-items: center; gap: 3px; font-size: 11px; }
.opts label::before { content: ""; width: 5px; border-top: 1px dotted #bbb; margin-right: -3px; }
.opts input { appearance: none; flex: none; width: 9px; height: 9px; margin: 0; border: 1px solid #777; position: relative; }
.opts input::after { content: ""; position: absolute; left: 1px; top: 1px; width: 5px; height: 3px; border: solid #222; border-width: 0 0 1px 1px; rotate: -45deg; }
.track { width: 15px; background: #f2f2f2; padding: 13px 4px 0 3px; }
.track i { display: block; height: 15px; background: #888; }
.acts { display: flex; justify-content: flex-end; gap: 7px; margin-top: 14px; }
.acts button { height: 20px; min-width: 29px; border: 1px solid #999; border-radius: 4px; padding: 0 3px; }
.grip { position: absolute; right: 1px; bottom: 1px; width: 7px; height: 7px; background: radial-gradient(#999 1px, transparent 1px) 0 0 / 3px 3px; clip-path: polygon(100% 0, 100% 100%, 0 100%); }
.sub-menu { left: 407px; top: 258px; width: 165px; height: 265px; }
.sub-menu hr { margin-top: 1px; margin-bottom: 1px; }

.note { position: absolute; pointer-events: none; }
.note span { position: absolute; left: 7px; top: 49px; width: 33px; height: 33px; border: 2px solid #f00; border-radius: 50%; color: #f00; font: 700 28px/28px "Noto Sans CJK JP", sans-serif; text-align: center; }
.n1 { left: 180px; top: 222px; }
.n2 { left: 321px; top: 297px; }
.n3 { left: 538px; top: 420px; }
.n3 span { left: 9px; top: 41px; }
</style>
